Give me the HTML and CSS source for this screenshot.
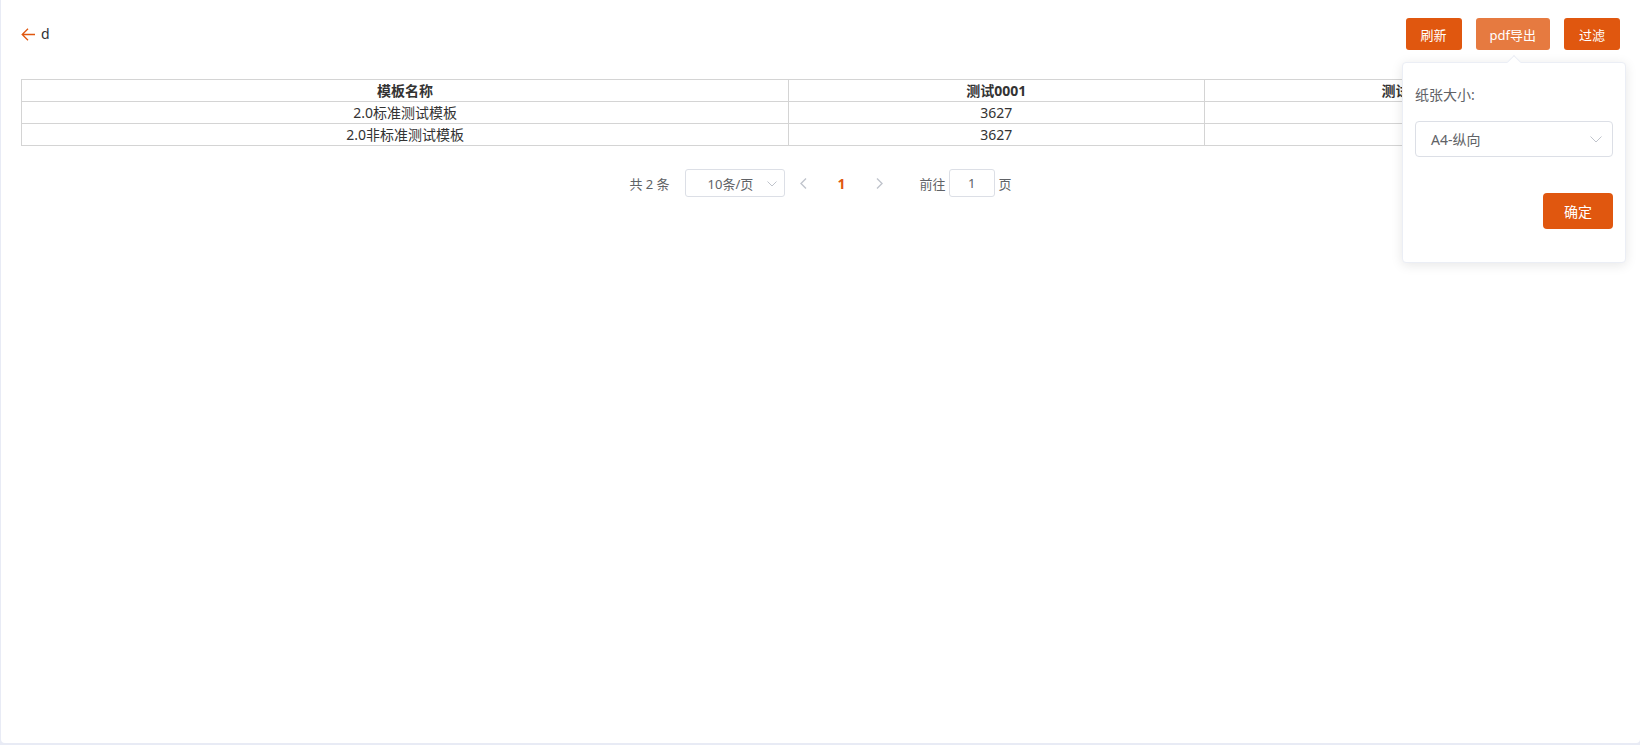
FILE: index.html
```html
<!DOCTYPE html>
<html lang="zh-CN">
<head>
  <meta charset="UTF-8">
  <title>报表</title>
  <link rel="stylesheet" href="styles.css">
</head>
<body>
  <div class="page">
    <!-- 顶部：返回 + 操作按钮 -->
    <div class="toolbar">
      <div class="back">
        <svg class="back-icon" width="14" height="13" viewBox="0 0 14 13">
          <path d="M1 6.5 H14 M7 0.7 L1.2 6.5 L7 12.3" fill="none" stroke="#e0570f" stroke-width="1.3"/>
        </svg>
        <span class="back-text">d</span>
      </div>
      <div class="actions">
        <button class="btn">刷新</button>
        <button class="btn btn-active">pdf导出</button>
        <button class="btn">过滤</button>
      </div>
    </div>

    <table class="report">
      <colgroup>
        <col class="col-name">
        <col>
        <col>
      </colgroup>
      <thead>
        <tr><th>模板名称</th><th>测试0001</th><th class="th-hidden">测试0002</th></tr>
      </thead>
      <tbody>
        <tr><td>2.0标准测试模板</td><td>3627</td><td></td></tr>
        <tr><td>2.0非标准测试模板</td><td>3627</td><td></td></tr>
      </tbody>
    </table>

    <div class="pager">
      <span class="pager-total">共 2 条</span>
      <div class="pager-size">
        <span>10条/页</span>
        <svg class="chev" width="10" height="6" viewBox="0 0 10 6"><path d="M0.5 0.5 L5 5 L9.5 0.5" fill="none" stroke="#c0c4cc" stroke-width="1"/></svg>
      </div>
      <span class="pager-btn">
        <svg width="7" height="11" viewBox="0 0 7 11"><path d="M6 0.5 L1 5.5 L6 10.5" fill="none" stroke="#c0c4cc" stroke-width="1.4"/></svg>
      </span>
      <span class="pager-btn pager-num">1</span>
      <span class="pager-btn">
        <svg width="7" height="11" viewBox="0 0 7 11"><path d="M1 0.5 L6 5.5 L1 10.5" fill="none" stroke="#c0c4cc" stroke-width="1.4"/></svg>
      </span>
      <span class="pager-jump">前往</span>
      <span class="pager-input">1</span>
      <span class="pager-unit">页</span>
    </div>

    <!-- 导出弹窗 -->
    <div class="popover">
      <div class="popover-label">纸张大小:</div>
      <div class="popover-select">
        <span>A4-纵向</span>
        <svg class="chev" width="12" height="7" viewBox="0 0 12 7"><path d="M0.5 0.5 L6 6 L11.5 0.5" fill="none" stroke="#c0c4cc" stroke-width="1"/></svg>
      </div>
      <div class="popover-footer">
        <button class="btn btn-confirm">确定</button>
      </div>
    </div>
  </div>
</body>
</html>
```

FILE: styles.css
```css
html, body {
  margin: 0;
  padding: 0;
  background: #e8ebf5;
  font-family: "Noto Sans", "Noto Sans CJK SC", sans-serif;
  color: #303133;
}
.page {
  position: relative;
  box-sizing: border-box;
  height: 743px;
  margin: 0 0 2px 1px;
  padding: 18px 20px 0 20px;
  background: #fff;
  border-radius: 0 0 4px 4px;
}
.toolbar {
  display: flex;
  justify-content: space-between;
  align-items: center;
  height: 32px;
}
.back {
  display: flex;
  align-items: center;
  gap: 6px;
}
.back-icon {
  display: block;
}
.back-text {
  font-size: 14px;
  line-height: 1;
}
.actions {
  display: flex;
  gap: 14px;
}
.btn {
  height: 32px;
  padding: 0 15px;
  border: none;
  border-radius: 3px;
  background: #e0570f;
  color: #fff;
  font-family: inherit;
  font-size: 13px;
  cursor: pointer;
}
.btn-active {
  background: #e67a40;
  padding: 0 14px;
}

/* 表格 */
.report {
  width: 100%;
  margin-top: 29px;
  border-collapse: collapse;
  table-layout: fixed;
  font-size: 14px;
  color: #333;
}
.col-name {
  width: 48%;
}
.report th,
.report td {
  height: 21px;
  padding: 0;
  line-height: 21px;
  border: 1px solid #d4d4d4;
  text-align: center;
  white-space: nowrap;
  overflow: hidden;
}
.report th {
  font-weight: bold;
}
/* 第三列标题被弹窗盖住，只露出前两个字 */
.th-hidden {
  text-align: left !important;
  padding-left: 177px !important;
}

/* 分页 */
.pager {
  display: flex;
  justify-content: center;
  align-items: center;
  margin-top: 23px;
  height: 28px;
  font-size: 13px;
  color: #606266;
}
.pager-total {
  margin-right: 15px;
}
.pager-size {
  position: relative;
  box-sizing: border-box;
  width: 100px;
  height: 28px;
  padding-left: 22px;
  border: 1px solid #dcdfe6;
  border-radius: 3px;
  display: flex;
  align-items: center;
}
.pager-size .chev {
  position: absolute;
  right: 7px;
  top: 11px;
}
.pager-btn {
  width: 38px;
  height: 28px;
  display: flex;
  align-items: center;
  justify-content: center;
}
.pager-num {
  color: #e0570f;
  font-weight: bold;
  font-size: 14px;
}
.pager-jump {
  margin-left: 21px;
}
.pager-input {
  box-sizing: border-box;
  width: 46px;
  height: 28px;
  margin-left: 3px;
  border: 1px solid #dcdfe6;
  border-radius: 3px;
  display: flex;
  align-items: center;
  justify-content: center;
}
.pager-unit {
  margin-left: 4px;
}

/* 弹窗 */
.popover {
  position: absolute;
  top: 62px;
  right: 14px;
  box-sizing: border-box;
  width: 224px;
  height: 201px;
  padding: 12px;
  background: #fff;
  border: 1px solid #ebeef5;
  border-radius: 4px;
  box-shadow: 0 2px 12px rgba(0, 0, 0, 0.1);
}
.popover::before {
  content: "";
  position: absolute;
  top: -6px;
  left: 106px;
  width: 9px;
  height: 9px;
  background: #fff;
  border-top: 1px solid #ebeef5;
  border-left: 1px solid #ebeef5;
  transform: rotate(45deg);
}
.popover-label {
  height: 40px;
  line-height: 40px;
  font-size: 14px;
  color: #606266;
}
.popover-select {
  position: relative;
  box-sizing: border-box;
  height: 36px;
  margin-top: 6px;
  padding-left: 15px;
  border: 1px solid #dcdfe6;
  border-radius: 4px;
  display: flex;
  align-items: center;
  font-size: 14px;
  color: #606266;
}
.popover-select .chev {
  position: absolute;
  right: 10px;
  top: 14px;
}
.popover-footer {
  display: flex;
  justify-content: flex-end;
  margin-top: 36px;
}
.btn-confirm {
  width: 70px;
  height: 36px;
  padding: 0;
  border-radius: 4px;
  font-size: 14px;
}
```
